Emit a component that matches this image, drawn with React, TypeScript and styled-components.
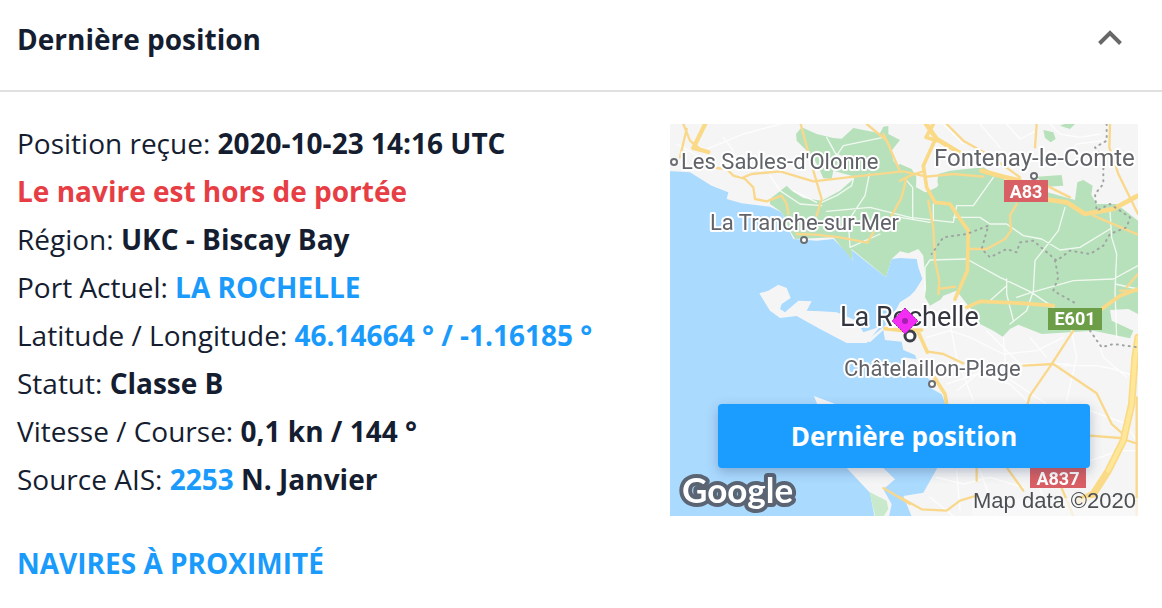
import React from "react";
import styled, { createGlobalStyle } from "styled-components";

const GlobalStyle = createGlobalStyle`
  * { box-sizing: border-box; }
  body {
    margin: 0;
    background: #fff;
    color: #151d30;
    font-family: "Open Sans", "Noto Sans", sans-serif;
    font-size: 28px;
  }
`;

const Header = styled.header`
  display: flex;
  align-items: center;
  justify-content: space-between;
  padding: 15px 36px 27px 17px;
  border-bottom: 2px solid #e0e0e0;
`;

const Title = styled.h2`
  margin: 0;
  font-size: 28px;
  font-weight: 700;
  line-height: 48px;
`;

const Toggle = styled.button`
  display: flex;
  padding: 0;
  border: 0;
  background: none;
  cursor: pointer;
`;

const Body = styled.div`
  display: flex;
  justify-content: space-between;
  align-items: flex-start;
  gap: 24px;
  padding: 27px 24px 20px 17px;
`;

const Details = styled.div`
  flex: 1;
  min-width: 0;
`;

const Row = styled.p<{ $alert?: boolean }>`
  margin: 0;
  line-height: 48px;
  color: ${(p) => (p.$alert ? "#e63e44" : "inherit")};
  font-weight: ${(p) => (p.$alert ? 700 : 400)};
`;

const Link = styled.a`
  color: #1a9bfc;
  font-weight: 700;
  text-decoration: none;
`;

const Nearby = styled.p`
  margin: 36px 0 0;
  line-height: 48px;
`;

const MapCard = styled.figure`
  position: relative;
  flex: 0 1 468px;
  margin: 5px 0 0;
`;

const MapDrawing = styled.svg`
  display: block;
  width: 100%;
  height: auto;
`;

const MapButton = styled.button`
  position: absolute;
  left: 48px;
  right: 48px;
  bottom: 48px;
  height: 64px;
  border: 0;
  border-radius: 4px;
  background: #1b9dff;
  box-shadow: 0 4px 12px rgba(40, 60, 100, 0.3);
  color: #fff;
  font: 700 26px "Open Sans", "Noto Sans", sans-serif;
  cursor: pointer;
`;

const Place = styled.text<{ $size?: number; $city?: boolean }>`
  font-family: Roboto, sans-serif;
  font-size: ${(p) => p.$size ?? 22}px;
  fill: ${(p) => (p.$city ? "#33363e" : "#606368")};
  stroke: #fff;
  stroke-width: 4px;
  stroke-linejoin: round;
  paint-order: stroke;
`;

const Shield = styled.text`
  font: 700 18px Roboto, sans-serif;
  fill: #fff;
  text-anchor: middle;
`;

const Credit = styled.text`
  font: 22px "Liberation Sans", sans-serif;
  fill: #4c4f53;
`;

const Logo = styled.text`
  font: 700 35px Lato, sans-serif;
  fill: #fff;
  stroke: #5a6472;
  stroke-width: 8px;
  stroke-linejoin: round;
  paint-order: stroke;
`;

const Terrain = styled.g`
  filter: blur(0.5px);
`;

const Labels = styled.g`
  filter: blur(0.4px);
`;

const MapView = () => (
  <MapDrawing viewBox="0 0 468 392" role="img" aria-label="La Rochelle">
    <rect width="468" height="392" fill="#f5f5f5" />
    <Terrain>
      <g transform="scale(0.333333)" fill="none" strokeLinejoin="round" strokeLinecap="round">
        {/* marshes and parks */}
        <g fill="#b7e1bb">
          <path d="M300 240 300 225 350 185 365 200 400 222 455 230 510 200 550 165 555 150 640 148 690 120 725 135 740 160 740 190 765 205 800 190 805 150 840 140 940 130 1010 170 1170 215 1215 228 1222 175 1240 168 1268 185 1264 212 1280 240 1340 240 1404 290 1404 570 1375 555 1320 558 1325 590 1335 595 1390 620 1380 643 1270 620 1115 630 1045 602 1020 615 998 638 970 620 930 600 900 550 880 530 850 505 780 545 765 520 768 490 760 395 745 375 715 388 690 382 665 405 648 460 545 375 548 412 490 340 375 345 360 320 335 265Z" />
          <path d="M378 30 395 10 440 30 490 42 515 44 550 12 630 28 640 8 655 6 655 30 690 48 665 80 670 110 700 150 560 160 490 140 485 165 460 163 450 140 430 100 380 50Z" />
          <path d="M1120 18 1150 25 1157 45 1142 55 1125 42ZM1170 5 1195-5 1215 0 1200 15ZM1100 158 1175 153 1180 185 1130 188Z" />
        </g>
        {/* ocean */}
        <path
          fill="#abdaff"
          d="M-20 140 60 145 125 185 175 205 170 225 215 238 300 248 335 265 355 315 370 345 440 350 490 345 525 380 548 412 545 378 600 422 648 460 665 405 690 402 740 405 745 430 757 465 735 500 720 515 690 535 660 590 640 610 590 650 600 655 640 618 645 648 695 653 700 678 735 693 740 706 700 700 706 720 750 740 780 768 780 791 815 811 830 850 800 1036 760 1106 700 1116 730 1190 -20 1190Z"
        />
        {/* islands */}
        <g fill="#f5f5f5">
          <path d="M268 508 295 500 325 482 350 492 362 522 335 540 330 555 345 565 385 530 425 532 410 560 450 562 500 565 560 590 580 625 630 608 590 657 530 657 450 615 380 576 330 582 300 560Z" />
          <path d="M432 816 490 838 560 920 640 1032 675 1066 640 1096 665 1141 655 1186 615 1186 600 1106 530 1032 480 940Z" />
        </g>
        <path fill="#c8e9cc" d="M598 1104 650 1130 655 1155 635 1186 618 1186Z" />
        {/* built-up areas */}
        <path fill="#f5f5f5" d="M740 150 795 145 805 185 770 205 738 190ZM820 515 860 500 890 540 930 600 850 640 770 590Z" />
        {/* minor roads */}
        <g stroke="#fff" strokeWidth="4" opacity="0.8">
          <path d="M100 80 220 30 350-5M20 60 110 110M160 40 190 80M300 155 330 200 390 240 455 245M370 200 440 235M470 40 500 95 520 65 640 40M500 90 560 120M550 165 545 185 500 215 455 235M598 150 585 215 535 290 540 370 630 330M470 262 600 250 720 280 850 295 860 245 910 245 970 160M690 280 780 295M710 170 728 190 728 285M790 240 790 290M850 280 930 280 960 300 1010 300 1060 335 1115 345 1170 378 1230 370 1320 315M1185 250 1165 320 1095 410 1090 500 1070 560 1020 600M1320 260 1325 340 1340 390 1335 500 1340 640M765 500 765 430 780 408 890 405 990 460 1085 505 1210 470 1330 465 1404 425M1010 465 1010 510 1030 590M1010 485 960 530M1085 505 1150 550M1085 505 1040 520M1335 480 1404 495" />
          <path d="M1010 0 1050 45 1100 20M1140 0 1170 30 1230 40 1290 30M1190 100 1220 60 1300 50M820 0 880 60M930 0 990 70M770 640 840 620 900 640 1000 690 1100 680 1180 640M840 600 860 700 910 830M950 620 1050 720 1200 720M1000 640 1010 760 1130 840M1080 640 1130 700M1200 600 1220 700 1190 830M1280 640 1300 700 1370 760M1404 760 1330 735 1280 725 1180 725M830 780 920 750 1020 780 1080 840M860 800 960 720M1260 860 1370 900 1404 960M1260 1010 1350 980 1404 980M800 1060 880 1080 960 1060 1060 1090M860 1040 870 1160M1090 1040 1120 1120M780 1120 850 1176M930 1040 980 1176" />
        </g>
        {/* secondary roads */}
        <g stroke="#f9d88c" strokeWidth="7">
          <path d="M40 0 60 50 90 75M50 15 30 100M120 130 170 135 190 155 225 165 250 190 255 225 290 232 335 215 350 240 355 270M220 160 245 150 330 142 430 172 560 157 700 142 770 158 850 150 940 158M392 0 408 60 430 140 455 225 440 275M590 0 650 50 688 138M640 30 660 70M710 160 695 220 665 275M610 325 592 356 510 340 440 332 380 330M690 170 720 155 760 142M775 230 790 310 795 410 808 470 805 510M805 495 855 488M1040 240 1020 275 1023 320 1005 345 950 375 895 375M1320 0 1318 70 1345 150 1404 270M1270 275 1404 332M1100 0 1095 70M830 0 880 50 960 95 1050 160M1100 170 1200 220" />
          <path d="M1210 620 1140 728 1080 815 1073 840M1060 725 1150 720 1280 808 1325 900 1370 940M770 682 820 690 880 718M1260 935 1350 942 1404 960M690 1120 755 1156 830 1160 870 1130 920 1115M920 1030 920 1070M1010 1030 1060 1100M1170 1080 1210 1176M640 1092 720 1140M1400 820 1400 1176M1350 500 1404 500M1370 490 1404 450" />
        </g>
        {/* main roads */}
        <g stroke="#fada86">
          <path strokeWidth="13" d="M108-5 70 72 115 84" />
          <path strokeWidth="11" d="M790 0 768 40 800 50M795 48 760 125 770 190 795 235 840 240 870 285 895 320 892 440 855 525M645 614 700 620 755 618M745 625 772 685M790 755 825 810 830 840M890 550 930 532 1060 538 1150 545M1295 555 1350 515 1404 495" />
          <path strokeWidth="14" d="M765-5 800 45 875 90M935 140 1000 158 1050 170M1120 225 1190 235 1245 270 1330 255 1404 215" />
          <path strokeWidth="22" d="M1404 640 1395 700 1385 840 1360 950 1315 1040 1270 1110 1230 1130" />
        </g>
        <path stroke="#ffe79a" strokeWidth="12" d="M1404 640 1395 700 1385 840 1360 950 1315 1040" />
        {/* department borders */}
        <path
          stroke="#9fa4a1"
          strokeWidth="6"
          strokeDasharray="3 15"
          d="M1310 0 1310 50 1275 70 1300 100 1300 180 1275 210 1280 260 1320 240 1380 280 1370 310 1320 330 1300 365 1260 390 1200 380 1160 410 1090 350 1050 355 1040 385 1010 375 960 400 935 375 955 305 890 330 820 340 785 390M1155 410 1165 460 1150 500 1220 540M1260 620 1295 670 1330 660 1404 670"
        />
      </g>
    </Terrain>
    <rect x="302" y="374" width="166" height="18" fill="#f8f8f8" opacity="0.75" />
    <Labels>
      {/* town markers */}
      <g fill="#fff" stroke="#6b6e73" strokeWidth="2">
        <circle cx="4" cy="38" r="3" />
        <circle cx="134" cy="116" r="3" />
        <circle cx="364" cy="52" r="3" />
        <circle cx="262" cy="260" r="3" />
        <circle cx="240" cy="212" r="5" stroke="#3c3f47" strokeWidth="3" />
      </g>
      <Place x="11" y="45">Les Sables-d'Olonne</Place>
      <Place $size={24} x="264" y="42">Fontenay-le-Comte</Place>
      <Place x="40" y="106">La Tranche-sur-Mer</Place>
      <Place x="174" y="252">Châtelaillon-Plage</Place>
      <Place $city $size={27} x="170" y="202">La Rochelle</Place>
      <rect x="334" y="56" width="44" height="22" fill="#d85f63" />
      <Shield x="356" y="74">A83</Shield>
      <rect x="378" y="184" width="54" height="22" fill="#6b9e47" />
      <Shield x="405" y="201">E601</Shield>
      <rect x="360" y="342" width="56" height="22" fill="#d85f63" />
      <Shield x="388" y="361">A837</Shield>
      {/* vessel */}
      <path d="M235 184 248 197 235 210 222 197Z" fill="#f42df4" stroke="#a31fae" strokeDasharray="2 1" />
      <circle cx="235" cy="197" r="3" fill="#a31fae" />
      <Logo x="12" y="379">Google</Logo>
      <Credit x="303" y="384">Map data ©2020</Credit>
    </Labels>
  </MapDrawing>
);

export default function App() {
  return (
    <>
      <GlobalStyle />
      <section>
        <Header>
          <Title>Dernière position</Title>
          <Toggle type="button" aria-label="Réduire">
            <svg width="32" height="32" viewBox="0 0 32 32" fill="none" stroke="#686868" strokeWidth="4">
              <path d="M5.5 20.5 16 10 26.5 20.5" />
            </svg>
          </Toggle>
        </Header>
        <Body>
          <Details>
            <Row>Position reçue: <b>2020-10-23 14:16 UTC</b></Row>
            <Row $alert>Le navire est hors de portée</Row>
            <Row>Région: <b>UKC - Biscay Bay</b></Row>
            <Row>Port Actuel: <Link href="#port">LA ROCHELLE</Link></Row>
            <Row>Latitude / Longitude: <Link href="#carte">46.14664 ° / -1.16185 °</Link></Row>
            <Row>Statut: <b>Classe B</b></Row>
            <Row>Vitesse / Course: <b>0,1 kn / 144 °</b></Row>
            <Row>Source AIS: <Link href="#station">2253</Link> <b>N. Janvier</b></Row>
            <Nearby><Link href="#proximite">NAVIRES À PROXIMITÉ</Link></Nearby>
          </Details>
          <MapCard>
            <MapView />
            <MapButton type="button">Dernière position</MapButton>
          </MapCard>
        </Body>
      </section>
    </>
  );
}
